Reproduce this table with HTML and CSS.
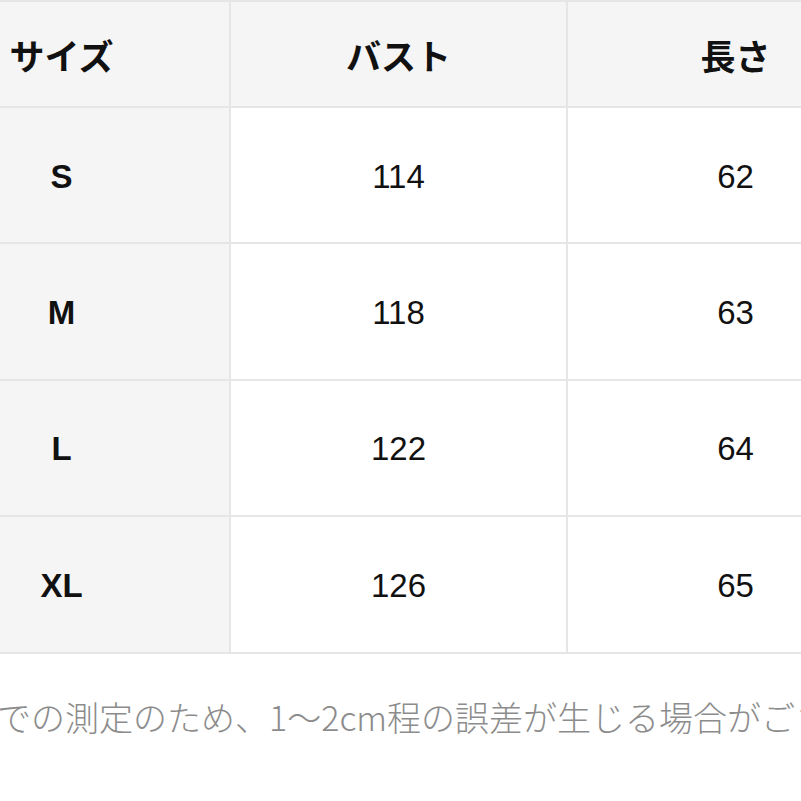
FILE: index.html
```html
<!DOCTYPE html>
<html lang="ja">
<head>
<meta charset="utf-8">
<link rel="stylesheet" href="styles.css">
</head>
<body>
<div class="page">
  <div class="sizes">
    <div class="cell head first">サイズ</div>
    <div class="cell head">バスト</div>
    <div class="cell head">長さ</div>

    <div class="cell first">S</div>
    <div class="cell">114</div>
    <div class="cell">62</div>

    <div class="cell first">M</div>
    <div class="cell">118</div>
    <div class="cell">63</div>

    <div class="cell first">L</div>
    <div class="cell">122</div>
    <div class="cell">64</div>

    <div class="cell first">XL</div>
    <div class="cell">126</div>
    <div class="cell">65</div>
  </div>
  <p class="note">※平置きでの測定のため、1〜2cm程の誤差が生じる場合がございます。</p>
</div>
</body>
</html>
```

FILE: styles.css
```css
html, body {
  margin: 0;
  padding: 0;
  background: #ffffff;
  overflow: hidden;
}

.page {
  width: 801px;
  height: 801px;
  overflow: hidden;
  position: relative;
  font-family: "Liberation Sans", "Noto Sans CJK JP", sans-serif;
  color: #111111;
}

.sizes {
  display: grid;
  grid-template-columns: 335px 335px 335px;
  grid-template-rows: 104px 134.4px 134.4px 134.4px 134.4px;
  gap: 2px;
  padding: 2px;
  margin-left: -108px;
  width: max-content;
  background: #e6e6e6;
}

.cell {
  display: flex;
  align-items: center;
  justify-content: center;
  background: #ffffff;
  font-size: 33px;
  padding-top: 3px;
}

.cell.first,
.cell.head {
  background: #f5f5f5;
  font-weight: bold;
}

.cell.head {
  font-size: 35px;
  padding-top: 0;
}

.note {
  margin: 38px 0 0 -139px;
  white-space: nowrap;
  font-size: 34px;
  font-weight: 300;
  color: #8c8c8c;
  font-family: "Noto Sans CJK JP", "Liberation Sans", sans-serif;
}
```
